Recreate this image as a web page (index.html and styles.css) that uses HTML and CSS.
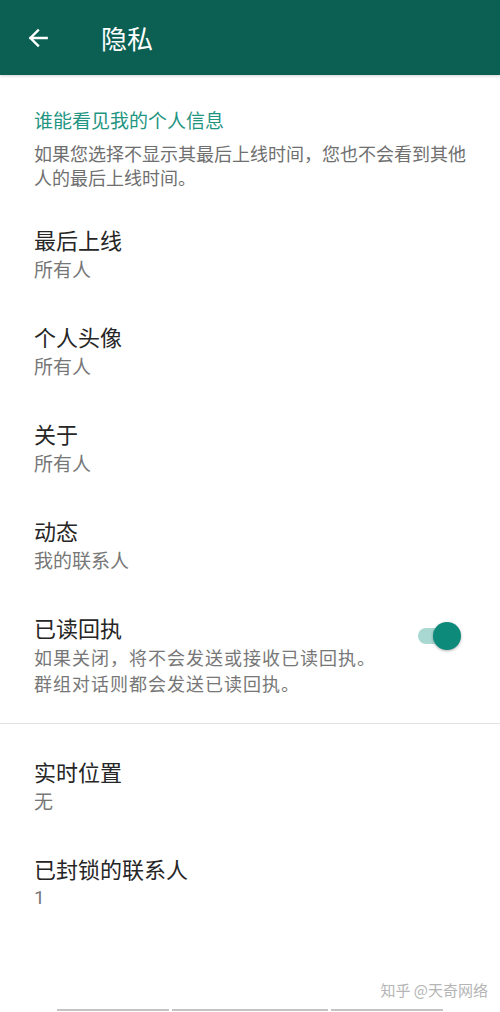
FILE: index.html
```html
<html>
<head>
<meta charset="utf-8">
<link rel="stylesheet" href="styles.css">
<title>隐私</title>
</head>
<body>
<div class="page">
  <div class="topbar">
    <svg class="back" width="26" height="26" viewBox="0 0 24 24">
      <path d="M20 12H5M12 5l-7 7 7 7" fill="none" stroke="#fff" stroke-width="2.2" stroke-linecap="square"/>
    </svg>
    <div class="title">隐私</div>
  </div>

  <div class="intro">
    <div class="section-title">谁能看见我的个人信息</div>
    <div class="section-desc">如果您选择不显示其最后上线时间，您也不会看到其他人的最后上线时间。</div>
  </div>

  <div class="item">
    <div class="item-title">最后上线</div>
    <div class="item-sub">所有人</div>
  </div>
  <div class="item">
    <div class="item-title">个人头像</div>
    <div class="item-sub">所有人</div>
  </div>
  <div class="item">
    <div class="item-title">关于</div>
    <div class="item-sub">所有人</div>
  </div>
  <div class="item">
    <div class="item-title">动态</div>
    <div class="item-sub">我的联系人</div>
  </div>
  <div class="item toggle-row">
    <div class="toggle-text">
      <div class="item-title">已读回执</div>
      <div class="item-desc">如果关闭，将不会发送或接收已读回执。<br>群组对话则都会发送已读回执。</div>
    </div>
    <div class="switch"><span class="track"></span><span class="thumb"></span></div>
  </div>

  <div class="divider"></div>

  <div class="more">
    <div class="item">
      <div class="item-title">实时位置</div>
      <div class="item-sub">无</div>
    </div>
    <div class="item">
      <div class="item-title">已封锁的联系人</div>
      <div class="item-sub num">1</div>
    </div>
  </div>

  <div class="watermark">知乎 @天奇网络</div>
  <div class="navlines">
    <span class="l1"></span><span class="l2"></span><span class="l3"></span>
  </div>
</div>
</body>
</html>
```

FILE: styles.css
```css
* {box-sizing: border-box;}

body {
  margin: 0;
  font-family: "Noto Sans CJK SC", "Noto Sans", sans-serif;
  background: #fff;
}

.page {
  position: relative;
  width: 500px;
  height: 1012px;
  overflow: hidden;
}

/* top bar */
.topbar {
  height: 75px;
  background-color: #0b5f53;
  display: flex;
  align-items: center;
  padding-left: 25px;
  box-shadow: 0 1px 3px rgba(0,0,0,0.18);
}

.back {
  display: block;
}

.title {
  color: #fff;
  font-size: 26px;
  margin-left: 50px;
  line-height: 38px;
}

/* intro block */
.intro {
  padding: 31px 30px 15px 34px;
}

.section-title {
  color: #1f9582;
  font-size: 19px;
  line-height: 28px;
}

.section-desc {
  margin-top: 7px;
  color: #6f6f6f;
  font-size: 18px;
  line-height: 24px;
}

/* rows */
.item {
  padding: 19px 34px 18px 34px;
}

.item-title {
  color: #262626;
  font-size: 22px;
  line-height: 32px;
}

.item-sub {
  color: #777;
  font-size: 19px;
  line-height: 28px;
}

.item-sub.num {
  font-family: "Roboto", "Noto Sans", sans-serif;
}

.item-desc {
  margin-top: 1px;
  color: #777;
  font-size: 18px;
  letter-spacing: 1px;
  line-height: 26px;
}

.toggle-row {
  display: flex;
  justify-content: space-between;
  align-items: flex-start;
  padding-right: 38px;
}

.switch {
  position: relative;
  width: 46px;
  height: 30px;
  margin-top: 10px;
}

.switch .track {
  position: absolute;
  left: 2px;
  top: 7px;
  width: 36px;
  height: 16px;
  border-radius: 8px;
  background: #a8d8d1;
}

.switch .thumb {
  position: absolute;
  left: 17px;
  top: 1px;
  width: 28px;
  height: 28px;
  border-radius: 50%;
  background: #0d8a7a;
  box-shadow: 0 1px 3px rgba(0,0,0,0.3);
}

.divider {
  margin-top: 9px;
  height: 1px;
  background: #e2e2e2;
}

.more {
  padding-top: 12px;
}

/* overlays */
.watermark {
  position: absolute;
  right: 12px;
  top: 979px;
  color: #b5b5b5;
  font-size: 15px;
  line-height: 22px;
}

.navlines span {
  position: absolute;
  top: 1009px;
  height: 2px;
  background: #c4c4c4;
}

.navlines .l1 {left: 57px; width: 112px;}
.navlines .l2 {left: 172px; width: 156px;}
.navlines .l3 {left: 331px; width: 112px;}
```
